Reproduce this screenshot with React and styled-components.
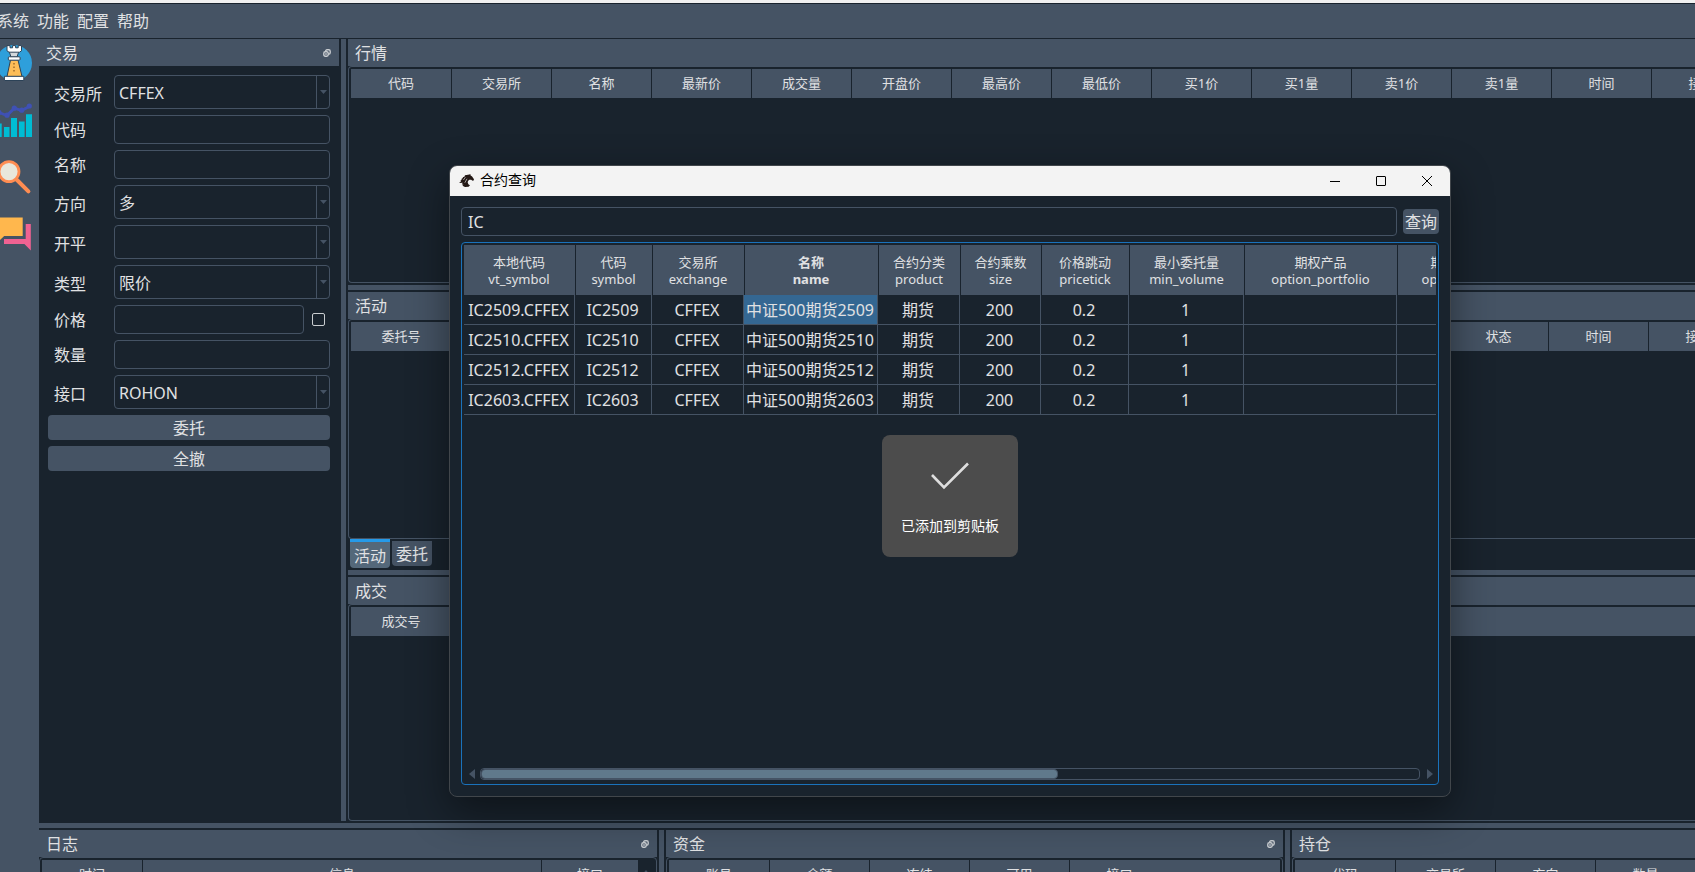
import React from 'react';
import styled, {createGlobalStyle} from 'styled-components';

const color = {
  base: '#19232d',
  panel: '#455364',
  tab: '#54687a',
  thumb: '#60798b',
  text: '#e0e1e3',
  focus: '#1a72bb',
  selected: '#346792',
  accent: '#259ae9',
};

const GlobalStyle = createGlobalStyle`
  *, *::before, *::after {
    box-sizing: border-box;
  }
  body {
    margin: 0;
    overflow: hidden;
    background: ${color.base};
  }
  body, button, input, select, table {
    font-family: 'Noto Sans', 'Noto Sans CJK SC', sans-serif;
    font-size: 16px;
    line-height: 20px;
    color: ${color.text};
  }
`;

const Desktop = styled.div`
  display: flex;
  flex-direction: column;
  height: 100vh;
  overflow: hidden;
  border-top: 3px solid #f0f0f0;
`;

const MenuBar = styled.nav`
  display: flex;
  flex: none;
  gap: 8px;
  align-items: center;
  height: 36px;
  margin-left: -3px;
  background: ${color.panel};
  border-top: 1px solid ${color.base};
  border-bottom: 1px solid ${color.base};
`;

const MenuItem = styled.button`
  padding: 0;
  border: 0;
  background: none;
`;

const Workspace = styled.div`
  display: flex;
  flex: 1;
  min-height: 0;
`;

const ToolBar = styled.aside`
  display: flex;
  flex: none;
  flex-direction: column;
  gap: 21px;
  width: 39px;
  padding-top: 6px;
  overflow: hidden;
  background: ${color.panel};
`;

const ToolButton = styled.button`
  display: block;
  width: 36px;
  height: 36px;
  margin-left: -4px;
  padding: 0;
  border: 0;
  background: none;
  svg {
    display: block;
  }
`;

const DockArea = styled.main`
  display: flex;
  flex: 1;
  flex-direction: column;
  min-width: 0;
`;

const DockRow = styled.div`
  display: flex;
  flex: 1;
  min-height: 0;
`;

// the window reaches below the screen, so only the top of these docks shows
const FooterRow = styled.div`
  display: flex;
  flex: none;
  height: 160px;
  margin-bottom: -118px;
`;

const DockColumn = styled.div`
  display: flex;
  flex: 1;
  flex-direction: column;
  min-width: 0;
`;

const Splitter = styled.div`
  flex: none;
  margin: ${p => (p.$vertical ? '0 2px' : '2px 0')};
  ${p => (p.$vertical ? 'width' : 'height')}: 5px;
  background: ${color.panel};
`;

const DockBox = styled.section`
  display: flex;
  flex-direction: column;
  flex: ${p => (p.$width ? 'none' : `${p.$grow || 1} 1 0`)};
  ${p => p.$width && `width: ${p.$width}px;`}
  min-width: 0;
  min-height: 0;
`;

const DockTitle = styled.header`
  display: flex;
  flex: none;
  align-items: center;
  justify-content: space-between;
  height: 27px;
  padding: 0 8px 0 7px;
  background: ${color.panel};
  h2 {
    margin: 0;
    padding-top: 2px;
    font-size: 16px;
    font-weight: 400;
    line-height: 25px;
  }
`;

const FloatButton = styled.button`
  width: 8px;
  height: 8px;
  padding: 0;
  border: 0;
  background: none;
  svg {
    display: block;
  }
`;

const Frame = styled.div`
  display: flex;
  flex: 1;
  min-height: 0;
  padding: ${p => (p.$open ? '2px 0 2px 2px' : '2px')};
  overflow: hidden;
  border: 1px solid ${color.panel};
  border-right-width: ${p => (p.$open ? 0 : 1)}px;
  border-radius: ${p => (p.$open ? '4px 0 0 4px' : '4px')};
`;

const TableClip = styled.div`
  flex: 1;
  min-width: 0;
  overflow: hidden;
`;

const MonitorTable = styled.table`
  width: 100%;
  table-layout: fixed;
  border-spacing: 0;
  background: ${color.panel};
  th {
    height: 29px;
    padding: 0 0 2px;
    font-size: 13px;
    font-weight: 400;
    border-left: 1px solid ${color.base};
  }
  th:first-child {
    border-left: 0;
  }
  td {
    padding: 0;
  }
`;

const ScrollGutter = styled.div`
  flex: none;
  width: 16px;
  padding: 0 3px;
`;

const TradeForm = styled.form`
  display: flex;
  flex: 1;
  flex-direction: column;
  gap: 6px;
  padding: 9px;
`;

const FieldRow = styled.div`
  display: flex;
  align-items: center;
  label {
    flex: none;
    width: 66px;
    padding: ${p => (p.$combo ? '3px' : '0')} 0 0 6px;
  }
`;

const TextBox = styled.input`
  flex: 1;
  min-width: 0;
  height: 29px;
  padding: 0 6px;
  border: 1px solid ${color.panel};
  border-radius: 4px;
  outline: 0;
  background: ${color.base};
`;

const ComboBox = styled.div`
  display: grid;
  flex: 1;
  grid-template-columns: 1fr 13px;
  height: 34px;
  border: 1px solid ${color.panel};
  border-radius: 4px;
  select {
    grid-row: 1;
    grid-column: 1 / 3;
    padding: 2px 4px 0;
    border: 0;
    outline: 0;
    appearance: none;
    background: transparent;
  }
`;

const ComboArrow = styled.span`
  display: flex;
  grid-row: 1;
  grid-column: 2;
  align-items: center;
  justify-content: center;
  border-left: 1px solid ${color.panel};
  pointer-events: none;
`;

const CheckBox = styled.input`
  flex: none;
  width: 13px;
  height: 13px;
  margin: 0 5px 0 8px;
  appearance: none;
  border: 1px solid #c9cdd0;
  border-radius: 2px;
`;

const Button = styled.button`
  flex: none;
  height: 25px;
  padding: 0 2px;
  border: 0;
  border-radius: 4px;
  background: ${color.panel};
`;

const TabBar = styled.div`
  display: flex;
  flex: none;
  gap: 2px;
  align-items: center;
  height: 29px;
  padding-left: 2px;
`;

const Tab = styled.button`
  width: 40px;
  height: ${p => (p.$active ? 29 : 25)}px;
  padding: ${p => (p.$active ? '2px' : '0')} 0 0;
  border: 0;
  border-top: ${p => (p.$active ? `3px solid ${color.accent}` : 0)};
  border-radius: 0 0 4px 4px;
  background: ${p => (p.$active ? color.tab : color.panel)};
`;

const Dialog = styled.section`
  position: absolute;
  top: 165px;
  left: 449px;
  display: flex;
  flex-direction: column;
  width: 1002px;
  height: 632px;
  overflow: hidden;
  border: 1px solid #41464b;
  border-radius: 8px;
  background: ${color.base};
  box-shadow: 0 14px 40px rgba(0, 0, 0, 0.45);
`;

const DialogTitle = styled.header`
  display: flex;
  flex: none;
  align-items: center;
  height: 30px;
  padding-left: 9px;
  background: #f3f3f3;
  h1 {
    flex: 1;
    margin: 0 0 0 6px;
    padding-bottom: 2px;
    font-size: 14px;
    font-weight: 400;
    line-height: 20px;
    color: #000;
  }
`;

const WindowButton = styled.button`
  display: flex;
  align-items: center;
  justify-content: center;
  width: 46px;
  height: 30px;
  padding: 0;
  border: 0;
  background: none;
`;

const DialogBody = styled.div`
  display: flex;
  flex: 1;
  flex-direction: column;
  gap: 6px;
  min-height: 0;
  padding: 11px;
`;

const SearchRow = styled.div`
  display: flex;
  gap: 6px;
  align-items: center;
`;

const ResultFrame = styled.div`
  display: flex;
  flex: 1;
  flex-direction: column;
  justify-content: space-between;
  min-height: 0;
  padding: 2px 2px 4px;
  border: 1px solid ${color.focus};
  border-radius: 4px;
`;

const ResultClip = styled.div`
  overflow: hidden;
`;

const ResultTable = styled.table`
  width: 1065px;
  table-layout: fixed;
  border-spacing: 0;
  text-align: center;
`;

const HeadCell = styled.th`
  height: 50px;
  padding: 1px 1px 0 0;
  font-size: 13px;
  font-weight: ${p => (p.$current ? 700 : 400)};
  line-height: 17px;
  background: ${color.panel};
  border-left: 1px solid ${color.base};
  &:first-child {
    border-left: 0;
  }
`;

const Cell = styled.td`
  height: 30px;
  padding: 0 1px 0 0;
  white-space: nowrap;
  border-right: 1px solid ${color.panel};
  border-bottom: 1px solid ${color.panel};
  background: ${p => (p.$selected ? color.selected : 'none')};
`;

const ScrollBar = styled.div`
  display: flex;
  gap: 5px;
  align-items: center;
  height: 12px;
`;

const ScrollTrack = styled.div`
  flex: 1;
  height: 12px;
  border: 1px solid ${color.panel};
  border-radius: 4px;
`;

const ScrollThumb = styled.div`
  height: 10px;
  border: 1px solid ${color.panel};
  border-radius: 4px;
  background: ${color.thumb};
`;

const ScrollArrow = styled.span`
  display: flex;
  justify-content: ${p => (p.$left ? 'flex-end' : 'flex-start')};
  width: 11px;
  padding-left: ${p => (p.$left ? 0 : 2)}px;
`;

const Toast = styled.div`
  position: absolute;
  top: 435px;
  left: 882px;
  display: flex;
  flex-direction: column;
  gap: 26px;
  align-items: center;
  width: 136px;
  height: 122px;
  padding-top: 27px;
  border-radius: 8px;
  background: #4c4c4c;
  font-size: 14px;
  color: #fff;
`;

const quoteColumns = [
  '代码', '交易所', '名称', '最新价', '成交量', '开盘价', '最高价',
  '最低价', '买1价', '买1量', '卖1价', '卖1量', '时间', '接口',
];
const orderColumns = [
  '委托号', ['来源', 197], '代码', '交易所', '类型', '方向', '开平',
  '价格', '总数量', '已成交', '状态', '时间', '接口',
];
const tradeColumns = [
  '成交号', '委托号', '代码', '交易所', '方向', '开平', '价格', '数量', '时间', '接口',
];
const logColumns = ['时间', ['信息', 'auto'], ['接口', 97]];
const accountColumns = ['账号', '余额', '冻结', '可用', '接口'];
const positionColumns = ['代码', '交易所', '方向', '数量', '昨仓'];

const contractColumns = [
  ['本地代码', 'vt_symbol', 111],
  ['代码', 'symbol', 77],
  ['交易所', 'exchange', 92],
  ['名称', 'name', 134],
  ['合约分类', 'product', 82],
  ['合约乘数', 'size', 81],
  ['价格跳动', 'pricetick', 88],
  ['最小委托量', 'min_volume', 115],
  ['期权产品', 'option_portfolio', 153],
  ['期权到期日', 'option_expiry', 132],
];
const contracts = ['2509', '2510', '2512', '2603'].map(month => [
  `IC${month}.CFFEX`, `IC${month}`, 'CFFEX', `中证500期货${month}`, '期货', '200', '0.2', '1', '', '',
]);

const tradeFields = [
  {id: 'exchange', label: '交易所', options: ['CFFEX']},
  {id: 'symbol', label: '代码'},
  {id: 'name', label: '名称'},
  {id: 'direction', label: '方向', options: ['多', '空']},
  {id: 'offset', label: '开平', options: ['', '开', '平']},
  {id: 'type', label: '类型', options: ['限价', '市价']},
  {id: 'price', label: '价格', check: true},
  {id: 'volume', label: '数量'},
  {id: 'gateway', label: '接口', options: ['ROHON']},
];

function RookIcon() {
  return (
    <svg width="36" height="36" viewBox="0 0 36 36">
      <circle cx="18" cy="18" r="18" fill="#2e9fdb" />
      <g stroke="#2c4257" strokeWidth="1" strokeLinejoin="round">
        <path d="M13 6h10l-2 6h-6z" fill="#d3d8dc" />
        <path d="M11 .6h3v2.2h2.6V.6h3v2.2h2.6V.6h3.3v5.2l-2 1.4H13l-2-1.4z" fill="#fff" />
        <path d="M14.5 15h7.5l4 16.5H11z" fill="#fdbd57" />
        <rect x="12.3" y="11.8" width="11.8" height="3.4" rx="1" fill="#fff" />
        <rect x="8.4" y="31.3" width="19.4" height="4.2" fill="#fff" />
      </g>
      <path d="M18 18v9" stroke="#a5702e" strokeWidth="1.6" strokeDasharray="1.5 2" />
    </svg>
  );
}

function ChartIcon() {
  return (
    <svg width="36" height="36" viewBox="0 0 36 36">
      <path d="M1 35V21.5h4.7V35zM8 35V25h5.5v10zM15 35V16h6v19zM23 35V19.5h5.6V35zM30 35V12.3h6V35z" fill="#00bcd4" />
      <path d="M3 10.5l8 3 7.3-7.3 7.4 2.3 7.6-4" fill="none" stroke="#3f51b5" strokeWidth="2.8" />
      <g fill="#3f51b5">
        <circle cx="3" cy="10.5" r="2.6" />
        <circle cx="11" cy="13.2" r="2.6" />
        <circle cx="18.3" cy="6.2" r="2.6" />
        <circle cx="25.7" cy="8.2" r="2.6" />
        <circle cx="33.3" cy="4" r="2.6" />
      </g>
    </svg>
  );
}

function SearchIcon() {
  return (
    <svg width="36" height="36" viewBox="0 0 36 36">
      <path d="M20 20l12.4 12.4" stroke="#ff8d52" strokeWidth="4" strokeLinecap="round" />
      <circle cx="13" cy="12.6" r="10" fill="#e9e7db" stroke="#ff8d52" strokeWidth="2.8" />
    </svg>
  );
}

function ChatIcon() {
  return (
    <svg width="36" height="36" viewBox="0 0 36 36">
      <path d="M0 1.5h26.7V20H8.2L4 24V20H0z" fill="#ffb74d" />
      <path d="M29.7 8h5.1v26.6L28.4 28H8v-5h21.7z" fill="#f06292" />
    </svg>
  );
}

function KnightIcon() {
  return (
    <svg width="15" height="14" viewBox="0 0 15 14">
      <path
        d="M6 1.2L10.4.5l.9-.5.3 1.4 1.5 1.2 1.9 2.6-.4 1.3-1 .3-1.500-1-1.800-.1-1.300 1.300-.3 1.700.9 1.700L11 11.200l-1.400 1.600L6 13l-2.500-1.200.9-1.400-1.600.2.9-1.800L0 9l2.200-1.800-1-.2 1.800-1.600-.9-.2 2-1.400-.5-.5 1.800-.6z"
        fill="#231815"
      />
      <path d="M6.4 3.2L4.400 6M8 4.800L5.800 8.800" stroke="#f3f3f3" strokeWidth=".6" />
    </svg>
  );
}

function FloatIcon() {
  return (
    <svg width="8" height="8" viewBox="0 0 8 8" fill="none" stroke="#c8ccd0" strokeWidth="1.4">
      <rect x="2.6" y=".8" width="4.6" height="4.4" rx="1.4" />
      <rect x=".8" y="2.8" width="4.4" height="4.4" rx="1.4" fill={color.panel} />
      <path d="M2.2 5h1.6" />
    </svg>
  );
}

function Triangle({width, height, points}) {
  return (
    <svg width={width} height={height} viewBox={`0 0 ${width} ${height}`}>
      <polygon points={points} fill={color.panel} />
    </svg>
  );
}

function Dock({title, floating, children, ...rest}) {
  return (
    <DockBox {...rest}>
      <DockTitle>
        <h2>{title}</h2>
        {floating && (
          <FloatButton type="button" aria-label={`浮动${title}`}>
            <FloatIcon />
          </FloatButton>
        )}
      </DockTitle>
      {children}
    </DockBox>
  );
}

function Monitor({columns, open, gutter}) {
  const cols = columns.map(col => (Array.isArray(col) ? col : [col, 100]));
  const stretch = cols.some(([, width]) => width === 'auto');
  return (
    <Frame $open={open}>
      <TableClip>
        <MonitorTable>
          <colgroup>
            {cols.map(([name, width]) => (
              <col key={name} style={{width}} />
            ))}
            {!stretch && <col />}
          </colgroup>
          <thead>
            <tr>
              {cols.map(([name]) => (
                <th key={name} scope="col">{name}</th>
              ))}
              {!stretch && <td />}
            </tr>
          </thead>
        </MonitorTable>
      </TableClip>
      {gutter && (
        <ScrollGutter>
          <Triangle width={10} height={6} points="0,6 5,0 10,6" />
        </ScrollGutter>
      )}
    </Frame>
  );
}

function Field({id, label, options, check}) {
  return (
    <FieldRow $combo={Boolean(options)}>
      <label htmlFor={id}>{label}</label>
      {options ? (
        <ComboBox>
          <select id={id} defaultValue={options[0]}>
            {options.map(option => (
              <option key={option}>{option}</option>
            ))}
          </select>
          <ComboArrow>
            <Triangle width={7} height={4} points="0,0 7,0 3.5,4" />
          </ComboArrow>
        </ComboBox>
      ) : (
        <TextBox id={id} type="text" />
      )}
      {check && <CheckBox type="checkbox" aria-label="跟随最新价" />}
    </FieldRow>
  );
}

function ContractDialog() {
  return (
    <Dialog role="dialog" aria-label="合约查询">
      <DialogTitle>
        <KnightIcon />
        <h1>合约查询</h1>
        <WindowButton type="button" aria-label="最小化">
          <svg width="10" height="10" stroke="#000" fill="none"><path d="M0 5.5h10" /></svg>
        </WindowButton>
        <WindowButton type="button" aria-label="最大化">
          <svg width="10" height="10" stroke="#000" fill="none">
            <rect x=".5" y=".5" width="9" height="9" rx=".5" />
          </svg>
        </WindowButton>
        <WindowButton type="button" aria-label="关闭">
          <svg width="10" height="10" stroke="#000" fill="none"><path d="M0 0l10 10M10 0L0 10" /></svg>
        </WindowButton>
      </DialogTitle>
      <DialogBody>
        <SearchRow>
          <TextBox type="text" defaultValue="IC" aria-label="合约代码" />
          <Button type="button">查询</Button>
        </SearchRow>
        <ResultFrame>
          <ResultClip>
            <ResultTable>
              <colgroup>
                {contractColumns.map(([, key, width]) => (
                  <col key={key} style={{width}} />
                ))}
              </colgroup>
              <thead>
                <tr>
                  {contractColumns.map(([name, key]) => (
                    <HeadCell key={key} scope="col" $current={key === 'name'}>
                      {name}
                      <br />
                      {key}
                    </HeadCell>
                  ))}
                </tr>
              </thead>
              <tbody>
                {contracts.map((row, r) => (
                  <tr key={row[0]}>
                    {row.map((value, c) => (
                      <Cell key={contractColumns[c][1]} $selected={r === 0 && c === 3}>
                        {value}
                      </Cell>
                    ))}
                  </tr>
                ))}
              </tbody>
            </ResultTable>
          </ResultClip>
          <ScrollBar>
            <ScrollArrow $left>
              <Triangle width={6} height={10} points="6,0 6,10 0,5" />
            </ScrollArrow>
            <ScrollTrack>
              <ScrollThumb style={{width: `${(972 / 1580) * 100}%`}} />
            </ScrollTrack>
            <ScrollArrow>
              <Triangle width={6} height={10} points="0,0 0,10 6,5" />
            </ScrollArrow>
          </ScrollBar>
        </ResultFrame>
      </DialogBody>
    </Dialog>
  );
}

function App() {
  return (
    <>
      <GlobalStyle />
      <Desktop lang="zh-CN">
        <MenuBar>
          {['系统', '功能', '配置', '帮助'].map(name => (
            <MenuItem key={name} type="button">{name}</MenuItem>
          ))}
        </MenuBar>
        <Workspace>
          <ToolBar>
            <ToolButton type="button" aria-label="策略"><RookIcon /></ToolButton>
            <ToolButton type="button" aria-label="图表"><ChartIcon /></ToolButton>
            <ToolButton type="button" aria-label="查询合约"><SearchIcon /></ToolButton>
            <ToolButton type="button" aria-label="社区"><ChatIcon /></ToolButton>
          </ToolBar>
          <DockArea>
            <DockRow>
              <Dock title="交易" floating $width={300}>
                <TradeForm>
                  {tradeFields.map(field => (
                    <Field key={field.id} {...field} />
                  ))}
                  <Button type="button">委托</Button>
                  <Button type="button">全撤</Button>
                </TradeForm>
              </Dock>
              <Splitter $vertical />
              <DockColumn>
                <Dock title="行情" $grow={244}>
                  <Monitor columns={quoteColumns} open />
                </Dock>
                <Splitter />
                <Dock title="活动" $grow={276}>
                  <Monitor columns={orderColumns} open />
                  <TabBar>
                    <Tab type="button" $active>活动</Tab>
                    <Tab type="button">委托</Tab>
                  </TabBar>
                </Dock>
                <Splitter />
                <Dock title="成交" $grow={244}>
                  <Monitor columns={tradeColumns} open />
                </Dock>
              </DockColumn>
            </DockRow>
            <Splitter />
            <FooterRow>
              <Dock title="日志" floating $grow={618}>
                <Monitor columns={logColumns} gutter />
              </Dock>
              <Splitter $vertical />
              <Dock title="资金" floating $grow={617}>
                <Monitor columns={accountColumns} />
              </Dock>
              <Splitter $vertical />
              <Dock title="持仓" $grow={403}>
                <Monitor columns={positionColumns} open />
              </Dock>
            </FooterRow>
          </DockArea>
        </Workspace>
      </Desktop>
      <ContractDialog />
      <Toast role="status">
        <svg width="38" height="28" viewBox="0 0 38 28" fill="none" stroke="#dedede" strokeWidth="2.6">
          <path d="M1 13l12 12.500L37 1.500" />
        </svg>
        已添加到剪贴板
      </Toast>
    </>
  );
}

export default App;
